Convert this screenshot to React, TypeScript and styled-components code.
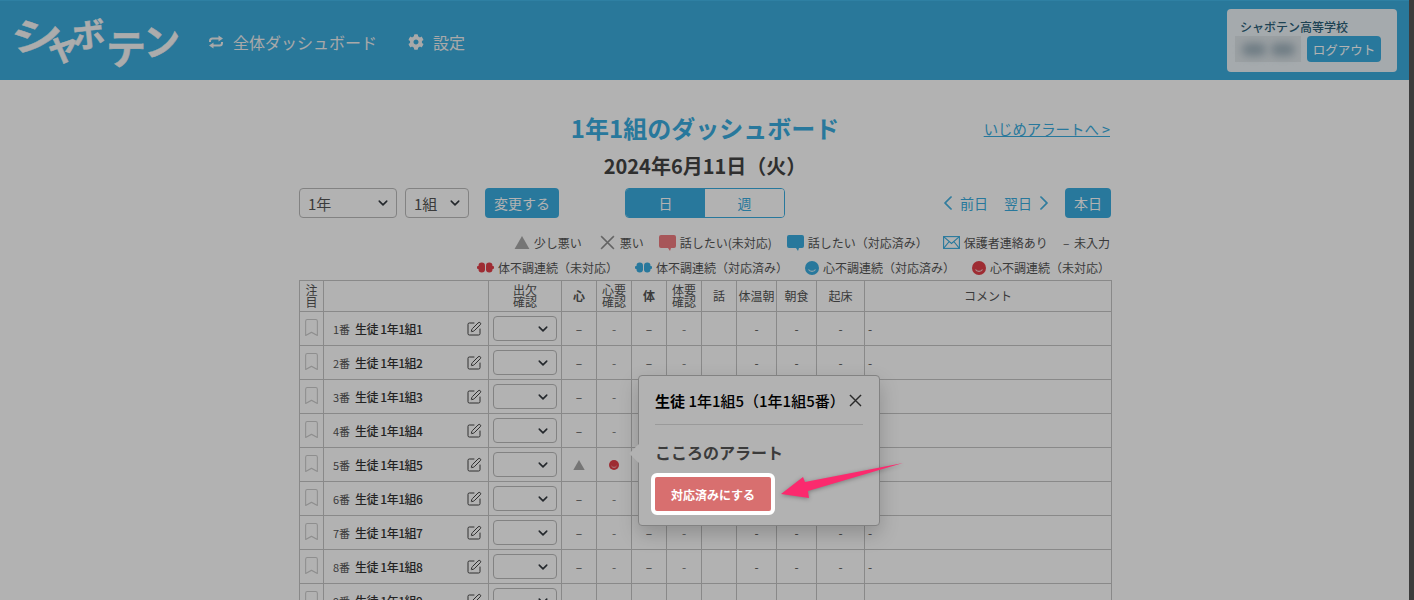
import React from "react";
import styled, { createGlobalStyle } from "styled-components";
import { FaCog } from "react-icons/fa";
import { BsBookmark, BsChevronLeft, BsChevronRight, BsXLg } from "react-icons/bs";
import { SquarePen } from "lucide-react";

const Global = createGlobalStyle`
	html, body {
		margin: 0;
		height: 600px;
		overflow: hidden;
		background: #fff;
	}
	body {
		font-family: "Noto Sans CJK JP", "Noto Sans", sans-serif;
		color: #333;
	}
	* {
		box-sizing: border-box;
	}
`;

const BLUE = "#3aade0";
const RED = "#e2404a";

const TriangleIcon = ({ size = 16 }: { size?: number }) => (
	<svg width={size} height={size * 0.87} viewBox="0 0 16 14">
		<path d="M8 0 16 14H0Z" fill="#a8a8a8" />
	</svg>
);

const BubbleIcon = ({ color }: { color: string }) => (
	<svg width="17" height="16" viewBox="0 0 17 16">
		<path
			d="M2 0h13a2 2 0 0 1 2 2v9a2 2 0 0 1-2 2h-3l-1 3-2-3H2a2 2 0 0 1-2-2V2a2 2 0 0 1 2-2Z"
			fill={color}
		/>
	</svg>
);

const BodyIcon = ({ color }: { color: string }) => (
	<svg width="17" height="11" viewBox="0 0 17 11">
		<rect x="1.500" y=".5" width="6.500" height="10" rx="3.200" fill={color} />
		<rect x="9" y=".5" width="6.500" height="10" rx="3.200" fill={color} />
		<rect x="0" y="4" width="3" height="3" rx="1" fill={color} />
		<rect x="14" y="4" width="3" height="3" rx="1" fill={color} />
	</svg>
);

const HeartIcon = ({ color, size = 14 }: { color: string; size?: number }) => (
	<svg width={size} height={size} viewBox="0 0 14 14">
		<circle cx="7" cy="7" r="7" fill={color} />
		<path d="M3.500 8.500c1.500 2.500 5.500 2.500 7 0" fill="none" stroke="#fff" strokeOpacity=".75" strokeWidth="1.100" />
	</svg>
);

const EnvelopeIcon = () => (
	<svg width="17" height="13" viewBox="0 0 17 13" fill="none" stroke={BLUE} strokeWidth="1.100">
		<rect x=".6" y=".6" width="15.800" height="11.800" />
		<path d="M.6.6 8.500 7.500 16.400.6M.6 12.400 6.200 5.500M16.400 12.400 10.800 5.500" />
	</svg>
);

const SyncIcon = () => (
	<svg width="16" height="14" viewBox="0 0 16 14">
		<path d="M2 7V6Q2 3.500 4.500 3.500H11M14 7V8Q14 10.500 11.500 10.500H5" fill="none" stroke="#f2f2f2" strokeWidth="2" />
		<path d="M10.500.5 15 3.500 10.500 6.500ZM5.500 7.500 1 10.500 5.500 13.500Z" fill="#f2f2f2" />
	</svg>
);

const Page = styled.div`
	width: 1410px;
`;

const Header = styled.header`
	height: 80px;
	background: #3cacdd;
	border-top: 1px solid #42b8ea;
	display: flex;
	align-items: flex-start;
	justify-content: space-between;
	padding: 0 13px 0 15px;
`;

const HeaderLeft = styled.div`
	display: flex;
	align-items: flex-start;
`;

const Logo = styled.div`
	display: flex;
	width: 193px;
	height: 79px;
	color: #f6f6f6;
	font-weight: 700;
	line-height: 1;
	-webkit-text-stroke: 0.5px currentColor;
`;

const LogoChar = styled.span<{ $size: number; $top: number; $width: number; $transform: string }>`
	display: block;
	flex: none;
	width: ${p => p.$width}px;
	height: ${p => p.$size}px;
	font-size: ${p => p.$size}px;
	margin-top: ${p => p.$top}px;
	transform: ${p => p.$transform};
	transform-origin: ${p => p.$size / 2}px ${p => p.$size / 2}px;
`;

const NavItem = styled.a`
	display: flex;
	align-items: center;
	gap: 9px;
	margin-top: 29px;
	margin-right: 31px;
	font-size: 16px;
	line-height: 24px;
	color: #f2f2f2;
	svg {
		font-size: 16px;
		color: #f2f2f2;
	}
`;

const Account = styled.div`
	width: 170px;
	height: 63px;
	margin-top: 8px;
	background: #ecf4f8;
	border-radius: 4px;
	padding: 10px 16px 0 8px;
`;

const School = styled.div`
	font-size: 12px;
	line-height: 16px;
	font-weight: 500;
	color: #2b5f78;
	padding-left: 5px;
`;

const AccountRow = styled.div`
	display: flex;
	align-items: center;
	justify-content: space-between;
	margin-top: 1px;
`;

const BlurredName = styled.div`
	width: 66px;
	height: 26px;
	background: #dfe6ea;
	display: flex;
	align-items: center;
	justify-content: space-around;
	padding: 0 4px;
	span {
		width: 24px;
		height: 13px;
		border-radius: 6px;
		background: #9fb2bd;
		filter: blur(4px);
	}
`;

const Logout = styled.button`
	width: 74px;
	height: 26px;
	padding: 0;
	border: 0;
	border-radius: 4px;
	background: ${BLUE};
	color: #fff;
	font: inherit;
	font-size: 12.500px;
`;

const Main = styled.main`
	position: relative;
	width: 812px;
	margin: 0 auto;
`;

const TitleRow = styled.div`
	position: relative;
	padding-top: 29px;
	height: 65px;
	text-align: center;
`;

const Title = styled.h1`
	margin: 0;
	font-size: 24px;
	line-height: 38px;
	font-weight: 700;
	color: ${BLUE};
`;

const AlertLink = styled.a`
	position: absolute;
	right: 1px;
	top: 39px;
	font-size: 14.400px;
	line-height: 20px;
	color: ${BLUE};
	text-decoration: underline;
`;

const DateLabel = styled.div`
	font-size: 20px;
	line-height: 26px;
	font-weight: 700;
	text-align: center;
	color: #444;
	margin-top: 8px;
`;

const Controls = styled.div`
	display: flex;
	align-items: center;
	height: 30px;
	margin-top: 9px;
`;

const Select = styled.select<{ $width: number; $gap?: number }>`
	appearance: none;
	width: ${p => p.$width}px;
	height: 30px;
	margin-right: ${p => p.$gap ?? 0}px;
	padding: 0 0 0 8px;
	border: 1px solid #bbb;
	border-radius: 4px;
	background-color: #fff;
	background-image: url("data:image/svg+xml,%3csvg xmlns='http://www.w3.org/2000/svg' viewBox='0 0 16 16'%3e%3cpath fill='none' stroke='%23343a40' stroke-linecap='round' stroke-linejoin='round' stroke-width='2.500' d='M2 5l6 6 6-6'/%3e%3c/svg%3e");
	background-repeat: no-repeat;
	background-position: right 8px center;
	background-size: 10px 10px;
	font: inherit;
	font-size: 15px;
	color: #555;
`;

const BlueButton = styled.button<{ $width: number }>`
	width: ${p => p.$width}px;
	height: 30px;
	padding: 0;
	border: 0;
	border-radius: 4px;
	background: ${BLUE};
	color: #fff;
	font: inherit;
	font-size: 14px;
`;

const Toggle = styled.div`
	display: flex;
	width: 160px;
	height: 30px;
	margin-left: 66px;
	border: 1px solid ${BLUE};
	border-radius: 4px;
	overflow: hidden;
`;

const ToggleItem = styled.div<{ $active?: boolean }>`
	flex: 1;
	text-align: center;
	font-size: 14px;
	line-height: 28px;
	color: ${p => (p.$active ? "#fff" : BLUE)};
	background: ${p => (p.$active ? BLUE : "#fff")};
`;

const DayNav = styled.div`
	margin-left: auto;
	display: flex;
	align-items: center;
	gap: 4px;
	font-size: 14px;
	color: ${BLUE};
	margin-right: 13px;
	svg {
		font-size: 16px;
		stroke: currentColor;
		stroke-width: 0.8px;
	}
`;

const DayLink = styled.span<{ $gapRight?: number }>`
	margin-right: ${p => p.$gapRight ?? 0}px;
`;

const Legend = styled.div<{ $top: number; $right: number; $gap: number }>`
	display: flex;
	justify-content: flex-end;
	align-items: center;
	gap: ${p => p.$gap}px;
	height: 25px;
	margin-top: ${p => p.$top}px;
	padding-right: ${p => p.$right}px;
	font-size: 12px;
	color: #555;
`;

const LegendItem = styled.span<{ $after?: number }>`
	display: flex;
	align-items: center;
	gap: 4px;
	white-space: nowrap;
	margin-right: ${p => p.$after ?? 0}px;
`;

const NotEntered = styled(LegendItem)`
	word-spacing: 2px;
`;

const Table = styled.table`
	width: 812px;
	table-layout: fixed;
	border-collapse: collapse;
	font-size: 12px;
	color: #555;
	th, td {
		border: 1px solid #c4c4c4;
		padding: 0;
		text-align: center;
		vertical-align: middle;
	}
`;

const HeadRow = styled.tr`
	height: 31px;
	background: #fff;
	th {
		font-size: 12px;
		font-weight: 400;
		line-height: 12px;
	}
`;

const BoldTh = styled.th`
	&& {
		font-weight: 700;
	}
`;

const Row = styled.tr`
	height: 34px;
`;

const NameCell = styled.td`
	&& {
		text-align: left;
		padding: 0 6px 0 9px;
		font-size: 12px;
	}
	> div {
		display: flex;
		align-items: center;
	}
	small {
		font-size: 11px;
		margin-right: 5px;
	}
	b {
		font-weight: 500;
		color: #333;
		letter-spacing: -0.5px;
	}
	svg {
		margin-left: auto;
		color: #444;
	}
`;

const RowSelect = styled(Select)`
	display: block;
	margin: 0 auto;
	height: 25px;
`;

const Dash = styled.span<{ $soft?: boolean }>`
	color: ${p => (p.$soft ? "#777" : "#555")};
`;

const CommentCell = styled.td`
	&& {
		text-align: left;
		padding-left: 3px;
	}
`;

const Popover = styled.div`
	position: absolute;
	left: 339px;
	top: 295px;
	width: 242px;
	height: 151px;
	padding: 0 16px;
	background: #fff;
	border: 1px solid #bbb;
	border-radius: 4px;
	box-shadow: 0 8px 20px rgba(0, 0, 0, 0.2);
	&::before {
		content: "";
		position: absolute;
		left: -7px;
		top: 71px;
		width: 13px;
		height: 13px;
		background: #fff;
		transform: rotate(45deg);
	}
`;

const PopHead = styled.div`
	display: flex;
	align-items: center;
	justify-content: space-between;
	height: 49px;
	border-bottom: 1px solid #ddd;
	font-size: 15px;
	font-weight: 500;
	color: #000;
	white-space: nowrap;
	b {
		font-weight: 700;
	}
	svg {
		flex: none;
		font-size: 15px;
		color: #333;
		stroke: currentColor;
		stroke-width: 0.5px;
	}
`;

const PopTitle = styled.div`
	margin-top: 15px;
	font-size: 16px;
	line-height: 24px;
	font-weight: 700;
	color: #555;
`;

const Dim = styled.div`
	position: fixed;
	inset: 0;
	background: rgba(0, 0, 0, 0.3);
	z-index: 5;
`;

const Resolve = styled.button`
	position: absolute;
	left: 12px;
	top: 97px;
	z-index: 10;
	width: 124px;
	height: 42px;
	padding: 0;
	border: 4px solid #fff;
	border-radius: 6px;
	background: #d86f6f;
	color: #fff;
	font: inherit;
	font-size: 12px;
	font-weight: 700;
`;

const Pointer = styled.svg`
	position: fixed;
	left: 775px;
	top: 455px;
	z-index: 11;
	filter: drop-shadow(0 1px 2px rgba(0, 0, 0, 0.3));
`;

const ScrollEdge = styled.div`
	position: fixed;
	top: 0;
	right: 0;
	width: 5px;
	height: 600px;
	background: #3c3c3c;
	z-index: 12;
`;

const ROWS = [1, 2, 3, 4, 5, 6, 7, 8, 9];
const WIDTHS = [24, 165, 73, 35, 35, 35, 35, 35, 40, 40, 48, 247];

export default function App() {
	return (
		<Page>
			<Global />
			<Header>
				<HeaderLeft>
					<Logo>
						<LogoChar $size={44} $top={10} $width={29} $transform="rotate(-5deg) scale(1.2, 0.85)">シ</LogoChar>
						<LogoChar $size={36} $top={25} $width={28} $transform="rotate(-8deg)">ャ</LogoChar>
						<LogoChar $size={33} $top={16} $width={34} $transform="rotate(-6deg)">ボ</LogoChar>
						<LogoChar $size={40} $top={26} $width={37} $transform="none">テ</LogoChar>
						<LogoChar $size={37} $top={20} $width={37} $transform="rotate(-4deg)">ン</LogoChar>
					</Logo>
					<NavItem>
						<SyncIcon />
						全体ダッシュボード
					</NavItem>
					<NavItem>
						<FaCog />
						設定
					</NavItem>
				</HeaderLeft>
				<Account>
					<School>シャボテン高等学校</School>
					<AccountRow>
						<BlurredName>
							<span />
							<span />
						</BlurredName>
						<Logout>ログアウト</Logout>
					</AccountRow>
				</Account>
			</Header>
			<Main>
				<TitleRow>
					<Title>1年1組のダッシュボード</Title>
					<AlertLink>いじめアラートへ &gt;</AlertLink>
				</TitleRow>
				<DateLabel>2024年6月11日（火）</DateLabel>
				<Controls>
					<Select $width={98} $gap={8}>
						<option>1年</option>
					</Select>
					<Select $width={64} $gap={16}>
						<option>1組</option>
					</Select>
					<BlueButton $width={74}>変更する</BlueButton>
					<Toggle>
						<ToggleItem $active>日</ToggleItem>
						<ToggleItem>週</ToggleItem>
					</Toggle>
					<DayNav>
						<BsChevronLeft />
						<DayLink $gapRight={12}>前日</DayLink>
						<DayLink>翌日</DayLink>
						<BsChevronRight />
					</DayNav>
					<BlueButton $width={46}>本日</BlueButton>
				</Controls>
				<Legend $top={12} $right={1} $gap={15}>
					<LegendItem $after={2}>
						<TriangleIcon />
						少し悪い
					</LegendItem>
					<LegendItem>
						<BsXLg color="#8a8a8a" size={17} stroke="#8a8a8a" strokeWidth={0.6} />
						悪い
					</LegendItem>
					<LegendItem>
						<BubbleIcon color="#ef7c80" />
						話したい(未対応)
					</LegendItem>
					<LegendItem>
						<BubbleIcon color={BLUE} />
						話したい（対応済み）
					</LegendItem>
					<LegendItem>
						<EnvelopeIcon />
						保護者連絡あり
					</LegendItem>
					<NotEntered>– 未入力</NotEntered>
				</Legend>
				<Legend $top={0} $right={1} $gap={17}>
					<LegendItem>
						<BodyIcon color={RED} />
						体不調連続（未対応）
					</LegendItem>
					<LegendItem>
						<BodyIcon color={BLUE} />
						体不調連続（対応済み）
					</LegendItem>
					<LegendItem>
						<HeartIcon color={BLUE} />
						心不調連続（対応済み）
					</LegendItem>
					<LegendItem>
						<HeartIcon color={RED} />
						心不調連続（未対応）
					</LegendItem>
				</Legend>
				<Table>
					<colgroup>
						{WIDTHS.map((w, i) => (
							<col key={i} style={{ width: w }} />
						))}
					</colgroup>
					<thead>
						<HeadRow>
							<th>注<br />目</th>
							<th />
							<th>出欠<br />確認</th>
							<BoldTh>心</BoldTh>
							<th>心要<br />確認</th>
							<BoldTh>体</BoldTh>
							<th>体要<br />確認</th>
							<th>話</th>
							<th>体温朝</th>
							<th>朝食</th>
							<th>起床</th>
							<th>コメント</th>
						</HeadRow>
					</thead>
					<tbody>
						{ROWS.map(n => (
							<Row key={n}>
								<td>
									<BsBookmark color="#ccc" size={17} />
								</td>
								<NameCell>
									<div>
										<small>{n}番</small>
										<b>生徒 1年1組{n}</b>
										<SquarePen size={16} strokeWidth={1.5} />
									</div>
								</NameCell>
								<td>
									<RowSelect $width={64} />
								</td>
								<td>
									{n === 5 ? <TriangleIcon size={12} /> : <Dash>–</Dash>}
								</td>
								<td>
									{n === 5 ? <HeartIcon color={RED} size={10} /> : <Dash $soft>-</Dash>}
								</td>
								<td>{n !== 5 && <Dash>–</Dash>}</td>
								<td>{n !== 5 && <Dash $soft>-</Dash>}</td>
								<td />
								<td>-</td>
								<td>-</td>
								<td>-</td>
								<CommentCell>-</CommentCell>
							</Row>
						))}
					</tbody>
				</Table>
				<Popover>
					<PopHead>
						<span>
							<b>生徒</b> 1年1組5（1年1組5番）
						</span>
						<BsXLg />
					</PopHead>
					<PopTitle>こころのアラート</PopTitle>
					<Resolve>対応済みにする</Resolve>
				</Popover>
			</Main>
			<Dim />
			<Pointer width="135" height="50" viewBox="0 0 135 50">
				<path d="M128 8 30 27 28 22 6 39 34 43 33 36Z" fill="#fb2a6e" />
			</Pointer>
			<ScrollEdge />
		</Page>
	);
}
